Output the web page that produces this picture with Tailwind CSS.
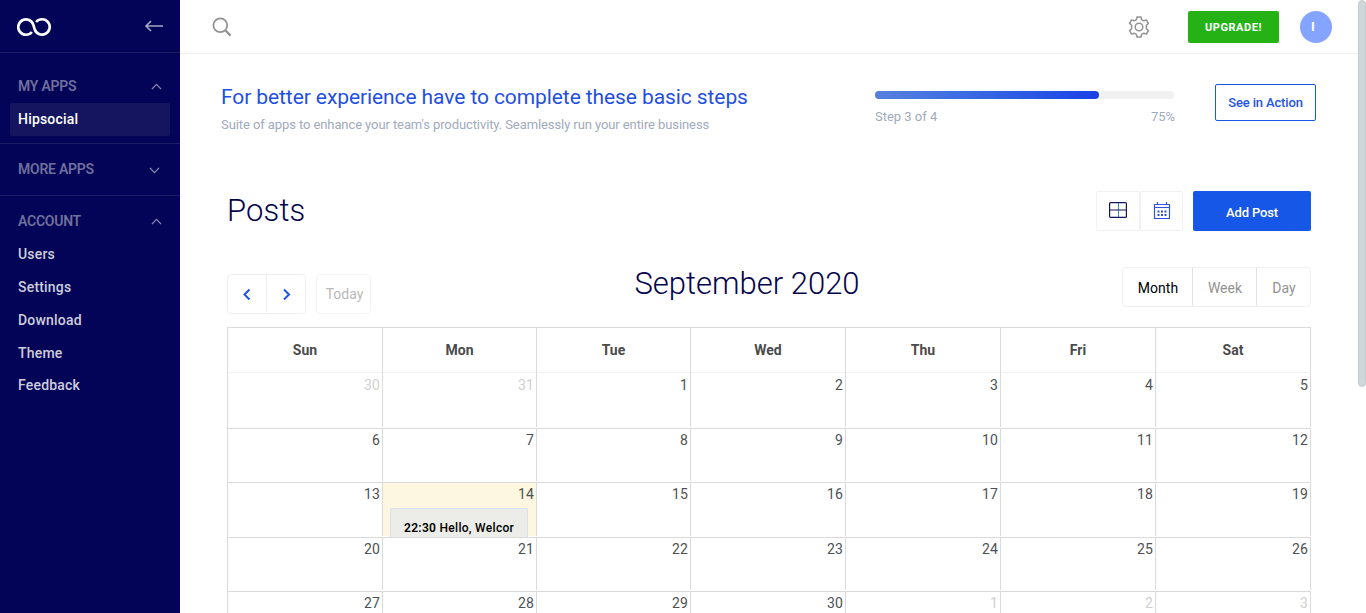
<!DOCTYPE html>
<html lang="en">
<head>
<meta charset="utf-8">
<title>Posts</title>
<script src="https://cdn.jsdelivr.net/npm/@tailwindcss/browser@4"></script>
</head>
<body class="flex h-[613px] w-[1366px] overflow-hidden bg-white font-['Roboto',sans-serif]">
<aside class="h-full w-[180px] shrink-0 bg-[#030357] text-sm font-medium tracking-[.2px] text-[#cdcddd]">
  <div class="flex h-[53px] items-center justify-between border-b border-[#1c1c68] pt-0.5 pr-4 pl-[17px]">
    <svg width="35" height="20" viewBox="0 0 35 20" fill="none" stroke="#fff" stroke-width="2.7"><path d="M14.900 15A7.700 7.700 0 1 1 16.400 8L17.600 12A7.700 7.700 0 1 0 19.100 5"/></svg>
    <svg class="mb-[3px]" width="20" height="14" viewBox="0 0 20 14" fill="none" stroke="#a6a6c4" stroke-width="1.6"><path d="M19 7H2M7 2 2 7l5 5"/></svg>
  </div>
  <div class="h-[91px] border-b border-[#1c1c68] px-2.5 pt-[17px]">
    <div class="flex h-[33px] items-center justify-between pr-2 pl-2 text-[#70709c]">
      <span class="pb-0.5 font-semibold tracking-[-0.25px]">MY APPS</span>
      <svg width="11" height="7" viewBox="0 0 11 7" fill="none" stroke="#8585ac" stroke-width="1.3"><path d="m1 6 4.5-4.6L10 6"/></svg>
    </div>
    <div class="flex h-[33px] items-center rounded-xs bg-[#14145f] pb-0.5 pl-2 text-white">Hipsocial</div>
  </div>
  <div class="flex h-[52px] items-center justify-between border-b border-[#1c1c68] pr-5 pl-[18px] text-[#70709c]">
    <span class="pb-0.5 font-semibold tracking-[-0.25px]">MORE APPS</span>
    <svg class="mt-0.5" width="11" height="7" viewBox="0 0 11 7" fill="none" stroke="#8585ac" stroke-width="1.3"><path d="m1 1 4.5 4.6L10 1"/></svg>
  </div>
  <div class="pt-[9px] pr-[18px] pl-[18px]">
    <div class="flex h-8 items-center justify-between text-[#70709c]">
      <span class="font-semibold tracking-[-0.25px]">ACCOUNT</span>
      <svg width="11" height="7" viewBox="0 0 11 7" fill="none" stroke="#8585ac" stroke-width="1.3"><path d="m1 6 4.5-4.6L10 6"/></svg>
    </div>
    <div class="flex h-[33px] items-center">Users</div>
    <div class="flex h-[33px] items-center">Settings</div>
    <div class="flex h-[33px] items-center">Download</div>
    <div class="flex h-[33px] items-center">Theme</div>
    <div class="flex h-8 items-center">Feedback</div>
  </div>
</aside>
<main class="h-full w-[1178px] shrink-0">
  <header class="flex h-[54px] items-center border-b border-[#f1f1f1] pr-[26px] pl-8">
    <svg width="20" height="20" viewBox="0 0 20 20" fill="none" stroke="#929292" stroke-width="1.8"><circle cx="8.3" cy="8.3" r="6.9"/><path d="m13.3 13.3 5.3 5.3" stroke-width="2.2"/></svg>
    <svg class="ml-auto" width="22" height="22" viewBox="0 0 22 22" fill="none" stroke="#929292" stroke-width="1.5"><path d="M9 1h4l.6 2.6 2.2 1.2 2.6-.9 2 3.5-2 1.8v3.6l2 1.8-2 3.5-2.6-.9-2.2 1.2L13 21H9l-.6-2.6-2.2-1.2-2.6.9-2-3.5 2-1.8V9.200l-2-1.800 2-3.500 2.600.9 2.200-1.200Z" stroke-linejoin="round"/><circle cx="11" cy="11" r="3.8"/></svg>
    <button class="ml-[38px] h-8 w-[91px] rounded-xs bg-[#25b215] pt-[3px] text-[11px] font-bold tracking-[.55px] text-white">UPGRADE!</button>
    <div class="ml-[21px] flex size-8 items-center justify-center rounded-full bg-[#84a4ff] pt-px pr-1.5 text-[13px] font-bold text-white">I</div>
  </header>
  <section class="flex h-[137px] items-start pt-[30px] pl-[41px]">
    <div class="w-[654px]">
      <h2 class="text-[21px] leading-[26px] tracking-[-0.09px] text-[#1f50e2]">For better experience have to complete these basic steps</h2>
      <p class="mt-[5px] text-[13px] leading-5 tracking-[-0.09px] text-[#a2aabc]">Suite of apps to enhance your team's productivity. Seamlessly run your entire business</p>
    </div>
    <div class="w-[299px] pt-[7px]">
      <div class="h-2 rounded-full bg-[#f1f1f1]"><div class="h-full w-3/4 rounded-full bg-linear-to-r from-[#5781de] to-[#1b40e6]"></div></div>
      <div class="mt-2 flex justify-between text-[13px] leading-5 tracking-[-0.02px] text-[#a2aabc]"><span>Step 3 of 4</span><span class="-mr-px">75%</span></div>
    </div>
    <button class="ml-[41px] h-[37px] w-[101px] rounded-xs border border-[#1657e7] text-[13px] font-medium tracking-[-0.15px] text-[#1f55e4]">See in Action</button>
  </section>
  <div class="w-[1131px] pl-[47px]">
    <section class="flex h-10 items-start">
      <h1 class="mr-auto text-[31px] leading-[40px] font-light tracking-[.15px] text-[#03034c]">Posts</h1>
      <button class="flex h-10 w-11 items-center justify-center rounded-xs border border-[#f1f1f1]">
        <svg class="mb-0.5" width="18" height="16" viewBox="0 0 18 16" fill="none"><path d="M9.500 1v14" stroke="#3d88df"/><path d="M1 8h16" stroke="#14145c"/><rect x=".6" y=".6" width="16.8" height="14.8" rx="1" stroke="#14145c" stroke-width="1.2"/></svg>
      </button>
      <button class="flex h-10 w-[43px] items-center justify-center rounded-xs border border-[#f1f1f1]">
        <svg class="mb-px" width="18" height="19" viewBox="0 0 18 19" fill="none" stroke="#3152e3"><path d="M1.500 3.500h15v14h-15zM1.500 6.500h15M4.500 1v3M13.500 1v3" stroke-width="1.2"/><path d="M4.500 10.500h2M8 10.500h2M11.500 10.500h2M4.500 14h2M8 14h2M11.500 14h2" stroke-width="2"/></svg>
      </button>
      <button class="ml-2.5 h-10 w-[118px] rounded-xs bg-[#1657e7] pt-[3px] text-[13px] font-medium tracking-[-0.15px] text-white">Add Post</button>
    </section>
    <section class="mt-9 flex h-[60px] items-start justify-between text-sm">
      <div class="mt-[7px] flex w-[272px] gap-2.5">
        <div class="flex h-10 w-[79px] rounded border border-[#efefef]">
          <button class="flex flex-1 items-center justify-center border-r border-[#efefef] pr-px"><svg width="9" height="12" viewBox="0 0 9 12" fill="none" stroke="#1f55e4" stroke-width="2"><path d="M7.500 1.500 2.500 6.500l5 5"/></svg></button>
          <button class="flex flex-1 items-center justify-center pl-px"><svg width="9" height="12" viewBox="0 0 9 12" fill="none" stroke="#1f55e4" stroke-width="2"><path d="m2 1.500 5 5-5 5"/></svg></button>
        </div>
        <button class="h-10 w-[55px] rounded border border-[#f5f5f5] pl-0.5 text-[#bababa]">Today</button>
      </div>
      <h2 class="-mt-[3px] text-[31px] leading-10 font-light text-[#03034c]">September 2020</h2>
      <div class="flex w-[316px] justify-end">
        <div class="flex h-10 w-[189px] rounded border border-[#f0f0f0]">
          <button class="w-[70px] border-r border-[#e2e2e2] pt-0.5 pl-px text-black">Month</button>
          <button class="w-16 border-r border-[#e2e2e2] pt-0.5 pl-px text-[#929292]">Week</button>
          <button class="w-[53px] pt-0.5 pl-px text-[#929292]">Day</button>
        </div>
      </div>
    </section>
    <div id="calendar" class="grid h-[286px] w-[1084px] grid-cols-[155px_154px_154px_155px_155px_155px_155px] grid-rows-[45px_56px_54px_55px_54px_55px] overflow-hidden border-t border-l border-[#dadada] text-sm text-[#4d5156]"></div>
  </div>
</main>
<div class="h-[387px] w-2 shrink-0 rounded border border-[#c3ccd0] bg-[#cfd7da]"></div>
<script>
const cal = document.getElementById('calendar');
let html = '';
for (const d of ['Sun','Mon','Tue','Wed','Thu','Fri','Sat'])
  html += `<div class="flex items-center justify-center border-r border-b border-r-[#dadada] border-b-[#f1f1f1] font-bold text-[#4b4b4b]">${d}</div>`;
for (let i = 0; i < 35; i++) {
  const day = i < 2 ? 30 + i : i > 31 ? i - 31 : i - 1;
  const muted = i < 2 || i > 31;
  const today = i === 15;
  html += `<div class="border-b border-[#dadada] pb-px"><div class="h-full border-r border-[#dadada] pr-0.5 text-right ${i < 7 ? 'pt-px' : ''} ${today ? 'bg-[#fdf6e1]' : ''}"><div class="leading-[22px] tracking-[.1px] ${muted ? 'text-[#cfcfcf]' : ''}">${day}</div>`;
  if (today) html += `<div class="mt-[3px] mr-1.5 ml-[7px] h-[29px] overflow-hidden rounded-t-xs border border-b-0 border-[#dae1ec] bg-[#ecede8] pt-[9px] pl-[13px] text-left text-xs leading-5 font-medium tracking-[.3px] whitespace-nowrap text-black"><div class="w-[111px] overflow-hidden"><span class="font-semibold">22:30</span> Hello, Welcor</div></div>`;
  html += '</div></div>';
}
cal.innerHTML = html;
</script>
</body>
</html>
